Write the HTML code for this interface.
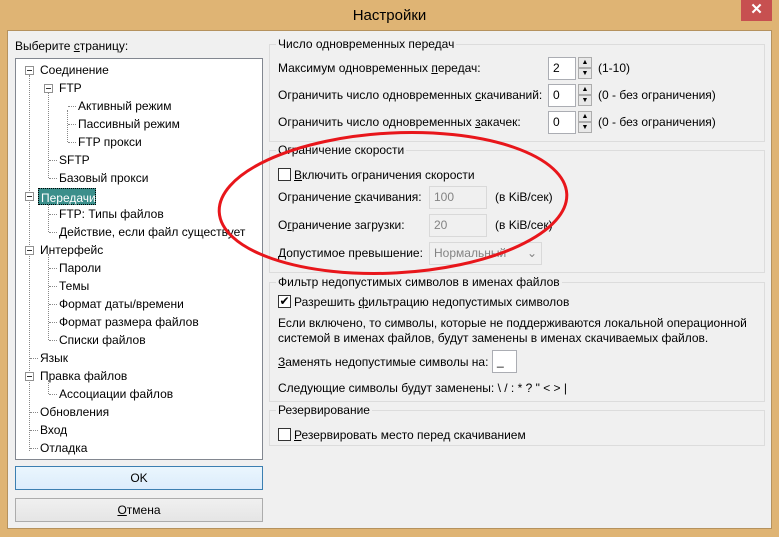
<!DOCTYPE html>
<html><head><meta charset="utf-8"><style>
*{box-sizing:border-box;margin:0;padding:0}
body{width:779px;height:537px;background:#dfb474;font-family:"Liberation Sans",sans-serif;font-size:12px;color:#000;position:relative;overflow:hidden}
.a{position:absolute;white-space:nowrap}
#title{left:0;top:7px;width:779px;text-align:center;font-size:15px;color:#000}
#close{left:741px;top:0;width:31px;height:21px;background:#c75050;color:#fff;text-align:center;font-size:15px;line-height:20px;font-weight:bold}
#client{left:7px;top:30px;width:765px;height:499px;background:#f0f0f0;border:1px solid #b5925e}
#tree{left:15px;top:58px;width:248px;height:402px;background:#fff;border:1px solid #828790}
.btn{left:15px;width:248px;height:24px;border:1px solid #acacac;background:linear-gradient(#f0f0f0,#e5e5e5);text-align:center;line-height:22px}
.grp{border:1px solid #dcdcdc;position:absolute;left:269px;width:496px}
.gl{background:#f0f0f0;padding:0 2px;left:276px}
.in{background:#fff;border:1px solid #abadb3;height:23px;padding:3px 4px}
.dis{background:#f0f0f0;border:1px solid #d9d9d9;color:#838383}
.sp{width:14px;height:11px;border:1px solid #acacac;background:#e8e8e8;font-size:7px;text-align:center;line-height:9px}
.cb{width:13px;height:13px;border:1px solid #333;background:#fff}
.pl{width:9px;height:9px;border:1px solid #919191;background:#fff}
.pl:after{content:"";position:absolute;left:1px;top:3px;width:5px;height:1px;background:#333}
.dv{border-left:1px dotted #888;width:0}
.dh{border-top:1px dotted #888;height:0}
u{text-decoration:underline}
</style></head><body>
<div class="a" id="title">Настройки</div>
<div class="a" id="close">✕</div>
<div class="a" id="client"></div>
<div class="a" style="left:15px;top:39px">Выберите <u>с</u>траницу:</div>
<div class="a" id="tree"></div>
<div class="a dv" style="left:29px;top:75px;height:376px"></div>
<div class="a dv" style="left:48px;top:92px;height:86px"></div>
<div class="a dv" style="left:67px;top:110px;height:32px"></div>
<div class="a dv" style="left:48px;top:200px;height:32px"></div>
<div class="a dv" style="left:48px;top:254px;height:86px"></div>
<div class="a dv" style="left:48px;top:380px;height:14px"></div>
<div class="a dh" style="left:49px;top:160px;width:8px"></div>
<div class="a dh" style="left:49px;top:178px;width:8px"></div>
<div class="a dh" style="left:68px;top:106px;width:8px"></div>
<div class="a dh" style="left:68px;top:124px;width:8px"></div>
<div class="a dh" style="left:68px;top:142px;width:8px"></div>
<div class="a dh" style="left:49px;top:214px;width:8px"></div>
<div class="a dh" style="left:49px;top:232px;width:8px"></div>
<div class="a dh" style="left:49px;top:268px;width:8px"></div>
<div class="a dh" style="left:49px;top:286px;width:8px"></div>
<div class="a dh" style="left:49px;top:304px;width:8px"></div>
<div class="a dh" style="left:49px;top:322px;width:8px"></div>
<div class="a dh" style="left:49px;top:340px;width:8px"></div>
<div class="a dh" style="left:49px;top:394px;width:8px"></div>
<div class="a dh" style="left:30px;top:358px;width:8px"></div>
<div class="a dh" style="left:30px;top:412px;width:8px"></div>
<div class="a dh" style="left:30px;top:430px;width:8px"></div>
<div class="a dh" style="left:30px;top:448px;width:8px"></div>
<div class="a pl" style="left:25px;top:66px"></div>
<div class="a pl" style="left:44px;top:84px"></div>
<div class="a pl" style="left:25px;top:192px"></div>
<div class="a pl" style="left:25px;top:246px"></div>
<div class="a pl" style="left:25px;top:372px"></div>
<div class="a" style="left:40px;top:63px">Соединение</div>
<div class="a" style="left:59px;top:81px">FTP</div>
<div class="a" style="left:78px;top:99px">Активный режим</div>
<div class="a" style="left:78px;top:117px">Пассивный режим</div>
<div class="a" style="left:78px;top:135px">FTP прокси</div>
<div class="a" style="left:59px;top:153px">SFTP</div>
<div class="a" style="left:59px;top:171px">Базовый прокси</div>
<div class="a" style="left:38px;top:188px;width:58px;height:17px;background:#3b8f8b;border:1px dotted #000;color:#fff;padding:2px 0 0 2px">Передачи</div>
<div class="a" style="left:59px;top:207px">FTP: Типы файлов</div>
<div class="a" style="left:59px;top:225px">Действие, если файл существует</div>
<div class="a" style="left:40px;top:243px">Интерфейс</div>
<div class="a" style="left:59px;top:261px">Пароли</div>
<div class="a" style="left:59px;top:279px">Темы</div>
<div class="a" style="left:59px;top:297px">Формат даты/времени</div>
<div class="a" style="left:59px;top:315px">Формат размера файлов</div>
<div class="a" style="left:59px;top:333px">Списки файлов</div>
<div class="a" style="left:40px;top:351px">Язык</div>
<div class="a" style="left:40px;top:369px">Правка файлов</div>
<div class="a" style="left:59px;top:387px">Ассоциации файлов</div>
<div class="a" style="left:40px;top:405px">Обновления</div>
<div class="a" style="left:40px;top:423px">Вход</div>
<div class="a" style="left:40px;top:441px">Отладка</div>
<div class="a btn" style="top:466px;border-color:#3c7fb1;background:linear-gradient(#eaf6fd,#dcecfc)">OK</div>
<div class="a btn" style="top:498px"><u>О</u>тмена</div>

<div class="grp" style="top:44px;height:98px"></div>
<div class="a gl" style="top:37px">Число одновременных передач</div>
<div class="a" style="left:278px;top:61px">Максимум одновременных <u>п</u>ередач:</div>
<div class="a" style="left:278px;top:88px">Ограничить число одновременных <u>с</u>качиваний:</div>
<div class="a" style="left:278px;top:115px">Ограничить число одновременных <u>з</u>акачек:</div>
<div class="a in" style="left:548px;top:57px;width:28px">2</div>
<div class="a in" style="left:548px;top:84px;width:28px">0</div>
<div class="a in" style="left:548px;top:111px;width:28px">0</div>
<div class="a sp" style="left:578px;top:57px">▲</div><div class="a sp" style="left:578px;top:68px">▼</div>
<div class="a sp" style="left:578px;top:84px">▲</div><div class="a sp" style="left:578px;top:95px">▼</div>
<div class="a sp" style="left:578px;top:111px">▲</div><div class="a sp" style="left:578px;top:122px">▼</div>
<div class="a" style="left:598px;top:61px">(1-10)</div>
<div class="a" style="left:598px;top:88px">(0 - без ограничения)</div>
<div class="a" style="left:598px;top:115px">(0 - без ограничения)</div>

<div class="grp" style="top:150px;height:123px"></div>
<div class="a gl" style="top:143px">Ограничение скорости</div>
<div class="a cb" style="left:278px;top:168px"></div>
<div class="a" style="left:294px;top:168px"><u>В</u>ключить ограничения скорости</div>
<div class="a" style="left:278px;top:190px">Ограничение <u>с</u>качивания:</div>
<div class="a in dis" style="left:429px;top:186px;width:58px">100</div>
<div class="a" style="left:495px;top:190px">(в KiB/сек)</div>
<div class="a" style="left:278px;top:218px">О<u>г</u>раничение загрузки:</div>
<div class="a in dis" style="left:429px;top:214px;width:58px">20</div>
<div class="a" style="left:495px;top:218px">(в KiB/сек)</div>
<div class="a" style="left:278px;top:246px">Допустимое превышение:</div>
<div class="a in dis" style="left:429px;top:242px;width:113px">Нормальный<span style="position:absolute;right:4px;top:3px">⌄</span></div>

<div class="grp" style="top:282px;height:120px"></div>
<div class="a gl" style="top:275px">Фильтр недопустимых символов в именах файлов</div>
<div class="a cb" style="left:278px;top:295px;font-size:12px;line-height:10px;text-align:center">✔</div>
<div class="a" style="left:294px;top:295px">Разрешить <u>ф</u>ильтрацию недопустимых символов</div>
<div class="a" style="left:278px;top:316px">Если включено, то символы, которые не поддерживаются локальной операционной</div>
<div class="a" style="left:278px;top:331px">системой в именах файлов, будут заменены в именах скачиваемых файлов.</div>
<div class="a" style="left:278px;top:355px"><u>З</u>аменять недопустимые символы на:</div>
<div class="a in" style="left:492px;top:350px;width:25px">_</div>
<div class="a" style="left:278px;top:381px">Следующие символы будут заменены: \ / : * ? " &lt; &gt; |</div>

<div class="grp" style="top:410px;height:36px"></div>
<div class="a gl" style="top:403px">Резервирование</div>
<div class="a cb" style="left:278px;top:428px"></div>
<div class="a" style="left:294px;top:428px"><u>Р</u>езервировать место перед скачиванием</div>

<svg class="a" style="left:0;top:0" width="779" height="537"><ellipse cx="393" cy="203" rx="174" ry="70" fill="none" stroke="#e8161b" stroke-width="3" transform="rotate(-3 393 203)"/></svg>
</body></html>
